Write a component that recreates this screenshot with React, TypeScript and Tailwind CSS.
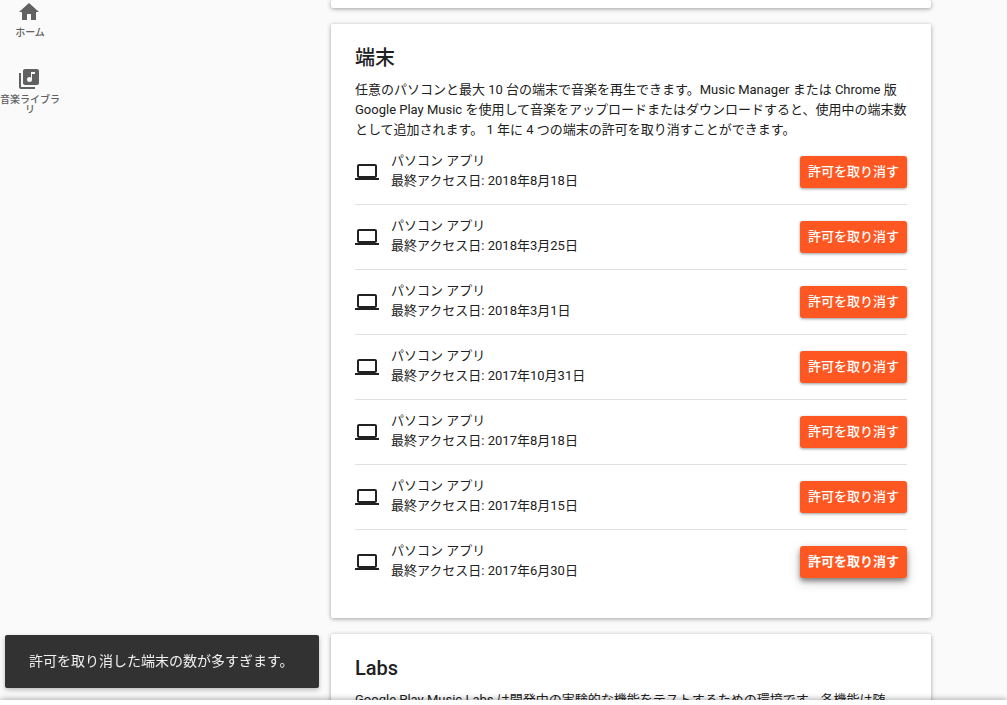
import { MdHome, MdLaptop, MdLibraryMusic } from "react-icons/md";
import clsx from "clsx";

type Device = {
    name: string;
    lastAccess: string;
    active?: boolean;
};

const navItems = [
    { label: "ホーム", href: "#home", icon: MdHome },
    { label: "音楽ライブラリ", href: "#library", icon: MdLibraryMusic },
];

const devices: Device[] = [
    { name: "パソコン アプリ", lastAccess: "2018年8月18日" },
    { name: "パソコン アプリ", lastAccess: "2018年3月25日" },
    { name: "パソコン アプリ", lastAccess: "2018年3月1日" },
    { name: "パソコン アプリ", lastAccess: "2017年10月31日" },
    { name: "パソコン アプリ", lastAccess: "2017年8月18日" },
    { name: "パソコン アプリ", lastAccess: "2017年8月15日" },
    { name: "パソコン アプリ", lastAccess: "2017年6月30日", active: true },
];

const cardClass = "w-full max-w-[600px] shrink-0 rounded-xs bg-white px-6 shadow-[0_1px_4px_rgba(0,0,0,0.37)]";
const titleClass = "mb-3 text-xl leading-5 font-medium";

const Sidebar = () => {
    return (
        <aside className="w-[255px] shrink-0">
            <nav className="flex w-[60px] flex-col gap-[29px]">
                {navItems.map(({ label, href, icon: Icon }) => (
                    <a key={href} href={href} className="flex flex-col gap-1 text-center text-[10px] leading-[10px] font-medium text-[#616161]">
                        <span className="flex justify-center pr-0.5">
                            <Icon className="h-6 w-6" />
                        </span>
                        <span className="break-all">{label}</span>
                    </a>
                ))}
            </nav>
        </aside>
    );
};

const DeviceRow = ({ device }: { device: Device }) => {
    return (
        <li className="flex items-center border-b border-[#e0e0e0] last:border-b-0">
            <MdLaptop className="h-6 w-6 shrink-0" />
            <div className="ml-3 flex h-16 flex-1 flex-col justify-center pb-0.5">
                <p>{device.name}</p>
                <p>最終アクセス日: {device.lastAccess}</p>
            </div>
            <button
                type="button"
                className={clsx(
                    "h-8 rounded-[3px] bg-[#ff5722] px-2 text-white",
                    device.active
                        ? "font-bold shadow-[0_3px_5px_rgba(0,0,0,0.4),0_4px_12px_rgba(0,0,0,0.2)]"
                        : "font-medium shadow-[0_1px_3px_rgba(0,0,0,0.4)]"
                )}
            >
                許可を取り消す
            </button>
        </li>
    );
};

const App = () => {
    return (
        <div className="flex h-screen flex-col overflow-hidden bg-[#fafafa] font-[Roboto,'Noto_Sans_CJK_JP',sans-serif] text-[13px] leading-5 text-[#212121]" lang="ja">
            <div className="flex min-h-0 flex-1 overflow-hidden">
                <Sidebar />
                <main className="flex flex-1 flex-col items-center gap-4">
                    <section className={clsx(cardClass, "h-2")}></section>

                    <section className={clsx(cardClass, "py-6")}>
                        <h2 className={titleClass}>端末</h2>
                        <p>
                            任意のパソコンと最大 10 台の端末で音楽を再生できます。Music Manager または Chrome 版 Google Play Music を使用して音楽をアップロードまたはダウンロードすると、使用中の端末数として追加されます。 1 年に 4 つの端末の許可を取り消すことができます。
                        </p>
                        <ul>
                            {devices.map((device) => (
                                <DeviceRow key={device.lastAccess} device={device} />
                            ))}
                        </ul>
                    </section>

                    <section className={clsx(cardClass, "py-6")}>
                        <h2 className={titleClass}>Labs</h2>
                        <p>Google Play Music Labs は開発中の実験的な機能をテストするための環境です。各機能は随</p>
                    </section>
                </main>
            </div>

            {/* top edge of the player bar */}
            <footer className="relative h-[5px] shrink-0 bg-white shadow-[0_0_6px_rgba(0,0,0,0.45)]"></footer>

            <div role="status" className="fixed bottom-[17px] left-[5px] flex min-h-[53px] min-w-[314px] items-center rounded-xs bg-[#323232] px-6 pb-0.5 text-sm text-[#f1f1f1] shadow-[0_2px_5px_rgba(0,0,0,0.26)]">
                許可を取り消した端末の数が多すぎます。
            </div>
        </div>
    );
};

export default App;
